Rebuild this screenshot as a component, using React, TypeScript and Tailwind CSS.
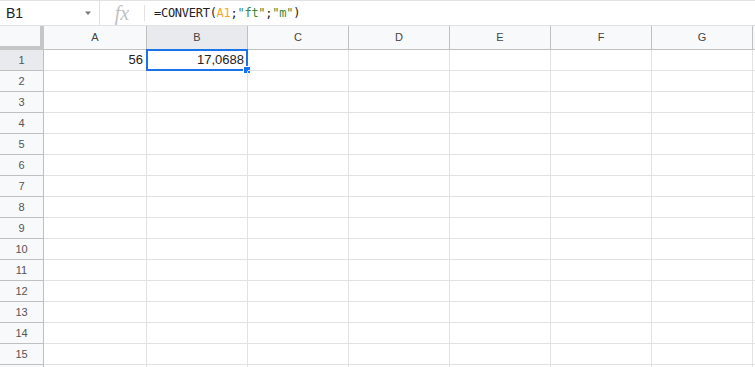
import React from "react";

const cols = ["A", "B", "C", "D", "E", "F", "G"];
const widths = ["w-[103px]", "w-[101px]", "w-[101px]", "w-[101px]", "w-[101px]", "w-[101px]", "w-[101px]"];
const rows = Array.from({ length: 16 }, (_, i) => i + 1);

export default function App() {
  return (
    <div className="w-[755px] h-[367px] overflow-hidden bg-white font-['Liberation_Sans',Arial,sans-serif] text-[#222]">
      {/* formula bar */}
      <div className="flex h-[26px] border-t border-b border-[#e1e1e1] items-center">
        <div className="flex items-center w-[100px] h-full border-r border-[#e1e1e1] pl-[6px] pr-[6px]">
          <span className="text-[14px] flex-1">B1</span>
          <svg width="8" height="5" viewBox="0 0 8 5" className="mr-[1px] mt-[1px]">
            <path d="M1 0.5 L4 4 L7 0.5 Z" fill="#777" />
          </svg>
        </div>
        <div className="flex items-center justify-center w-[44px] h-full">
          <span className="font-['Liberation_Serif',serif] italic text-[20px] text-[#c0c0c0] leading-none">fx</span>
        </div>
        <div className="w-px h-[16px] bg-[#e1e1e1]" />
        <div className="pl-[9px] font-['DejaVu_Sans_Mono',monospace] text-[12px] tracking-[-0.27px] whitespace-pre text-[#222]">
          =CONVERT(<span className="text-[#f4a72b]">A1</span>;<span className="text-[#3b8a3b]">"ft"</span>;<span className="text-[#3b8a3b]">"m"</span>)
        </div>
      </div>

      {/* column header */}
      <div className="flex h-[24px]">
        <div className="w-[44px] h-full bg-[#f8f9fa] border-b-[4px] border-r-[4px] border-[#c4c7c5]" />
        {cols.map((c, i) => (
          <div
            key={c}
            className={`${widths[i]} shrink-0 h-full flex items-center justify-center border-r border-b border-[#c0c0c0] text-[11px] text-[#444] ${
              c === "B" ? "bg-[#e8eaed]" : "bg-[#f8f9fa]"
            }`}
          >
            {c}
          </div>
        ))}
        <div className="flex-1 h-full bg-[#f8f9fa] border-b border-[#c0c0c0]" />
      </div>

      {rows.map((r) => (
        <div key={r} className="flex h-[21px]">
          <div
            className={`w-[44px] shrink-0 h-full flex items-center justify-center border-r border-b border-[#c0c0c0] text-[11px] text-[#555] ${
              r === 1 ? "bg-[#e8eaed]" : "bg-[#f8f9fa]"
            }`}
          >
            {r < 16 ? r : null}
          </div>
          {cols.map((c, i) => (
            <div
              key={c}
              className={`${widths[i]} shrink-0 h-full border-r border-b border-[#e2e2e2] relative flex items-center justify-end pr-[3px] text-[13px]`}
            >
              {r === 1 && c === "A" ? "56" : null}
              {r === 1 && c === "B" ? (
                <>
                  <div className="absolute left-[-1px] top-[-1px] w-[102px] h-[22px] border-2 border-[#1a73e8]" />
                  <div className="absolute right-[-4px] bottom-[-4px] w-[6px] h-[6px] bg-[#1a73e8] border border-white box-content" />
                  <span className="relative">17,0688</span>
                </>
              ) : null}
            </div>
          ))}
          <div className="flex-1 h-full border-b border-[#e2e2e2]" />
        </div>
      ))}
    </div>
  );
}
